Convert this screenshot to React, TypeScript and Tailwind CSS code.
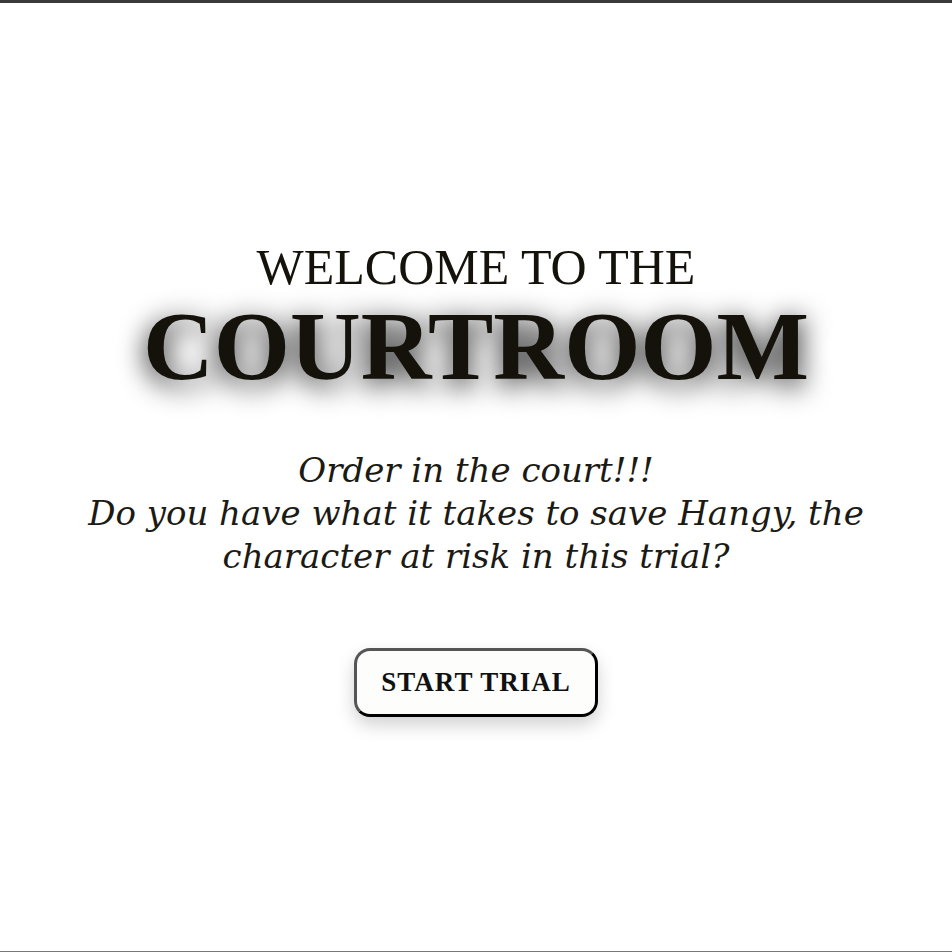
import React from 'react';

const App: React.FC = () => {
  const handleStart = () => {
    console.log('trial started');
  };

  return (
    <div className="min-h-screen h-screen bg-white border-t-[3px] border-t-[#3a3a3a] border-b border-b-[#777] flex flex-col items-center justify-center font-['Liberation_Serif',serif] text-center">
      <h1 className="text-[#14120b]">
        <span className="block text-[50px] leading-[1.2] font-normal">
          WELCOME TO THE
        </span>
        <span className="block text-[98px] leading-none font-bold [text-shadow:0_6px_28px_rgba(0,0,0,1)]">
          COURTROOM
        </span>
      </h1>

      <p className="mt-[54px] text-[34px] leading-[43px] italic text-[#1c1a14] font-['DejaVu_Serif',serif]">
        Order in the court!!!
        <br />
        Do you have what it takes to save Hangy, the
        <br />
        character at risk in this trial?
      </p>

      <button
        onClick={handleStart}
        className="mt-[70px] px-6 py-[15px] bg-[#fdfdfb] border-[3px] border-black border-t-[#555] border-l-[#555] rounded-2xl shadow-[0_8px_18px_rgba(0,0,0,0.18)] text-[27px] leading-[1.2] font-bold tracking-[1px] text-[#111]"
      >
        START TRIAL
      </button>
    </div>
  );
};

export default App;
